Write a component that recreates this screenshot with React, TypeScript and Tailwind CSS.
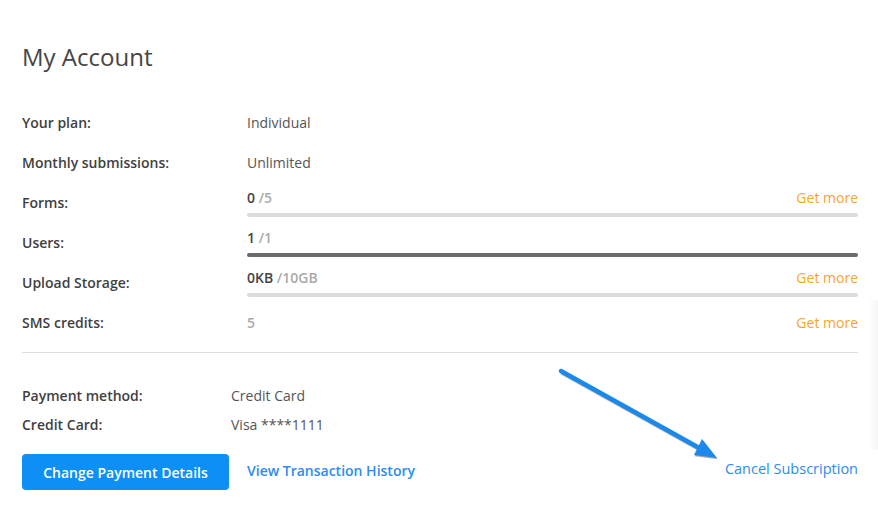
const usage = [
  { label: "Forms:", used: "0", total: "/5", pct: 0, more: true },
  { label: "Users:", used: "1", total: "/1", pct: 100, more: false },
  { label: "Upload Storage:", used: "0KB", total: "/10GB", pct: 0, more: true },
];

function GetMore() {
  return <span className="text-[14px] text-[#f7a52a]">Get more</span>;
}

function Row({ label, children }: { label: string; children: React.ReactNode }) {
  return (
    <div className="flex h-10 items-center">
      <div className="w-[225px] shrink-0 text-[14px] font-semibold text-[#3f3f3f]">{label}</div>
      <div className="flex-1">{children}</div>
    </div>
  );
}

export default function App() {
  return (
    <div
      className="relative h-[515px] w-[878px] overflow-hidden bg-white"
      style={{ fontFamily: '"Open Sans", "Liberation Sans", sans-serif' }}
    >
      <div className="pointer-events-none absolute right-0 top-[300px] h-[150px] w-[10px] bg-gradient-to-r from-white to-[#f6f6f6]" />

      <div className="w-[858px] pl-[22px] pt-[41px]">
        <h1 className="text-[24px] leading-8 text-[#454545]">My Account</h1>

        <div className="mt-[29px]">
          <Row label="Your plan:">
            <span className="text-[14px] text-[#555]">Individual</span>
          </Row>
          <Row label="Monthly submissions:">
            <span className="text-[14px] text-[#555]">Unlimited</span>
          </Row>
          {usage.map((u) => (
            <Row key={u.label} label={u.label}>
              <div className="flex flex-col">
                <div className="flex items-center justify-between leading-5">
                  <span className="text-[14px] font-semibold">
                    <span className="text-[#444]">{u.used}</span>{" "}
                    <span className="text-[#aaa]">{u.total}</span>
                  </span>
                  {u.more && <GetMore />}
                </div>
                <div className="mt-[5px] h-[4px] rounded-full bg-[#dcdcdc]">
                  <div className="h-full rounded-full bg-[#6b6b6b]" style={{ width: `${u.pct}%` }} />
                </div>
              </div>
            </Row>
          ))}
          <Row label="SMS credits:">
            <div className="flex items-center justify-between">
              <span className="text-[14px] font-semibold text-[#aaa]">5</span>
              <GetMore />
            </div>
          </Row>
        </div>

        <div className="mt-[10px] border-t border-[#dedede]" />

        <div className="pt-[28px]">
          <div className="flex h-[29px] items-center">
            <div className="w-[209px] shrink-0 text-[14px] font-semibold text-[#3f3f3f]">Payment method:</div>
            <span className="text-[14px] text-[#555]">Credit Card</span>
          </div>
          <div className="flex h-[29px] items-center">
            <div className="w-[209px] shrink-0 text-[14px] font-semibold text-[#3f3f3f]">Credit Card:</div>
            <span className="text-[14px] text-[#555]">Visa ****1111</span>
          </div>
        </div>

        <div className="mt-[15px] flex items-center">
          <button
            type="button"
            className="h-9 w-[207px] rounded-[4px] bg-[#0e8ff5] text-[14px] font-semibold text-white"
          >
            Change Payment Details
          </button>
          <a className="mb-[3px] ml-[18px] text-[14px] font-semibold text-[#2d8cf0]">View Transaction History</a>
          <a className="mb-[7px] ml-auto text-[14.5px] text-[#2b8cf0]">Cancel Subscription</a>
        </div>
      </div>

      <svg className="pointer-events-none absolute left-0 top-0" width="878" height="515">
        <g transform="translate(0.6,1.2)" opacity="0.45">
          <line x1="561" y1="371" x2="703" y2="450" stroke="#3a4a5a" strokeWidth="4.5" />
          <polygon points="694,455 702,439 717,458" fill="#3a4a5a" />
        </g>
        <line x1="561" y1="371" x2="703" y2="450" stroke="#1b88ec" strokeWidth="4.5" strokeLinecap="round" />
        <polygon points="694,455 702,439 717,458" fill="#1b88ec" />
      </svg>
    </div>
  );
}
